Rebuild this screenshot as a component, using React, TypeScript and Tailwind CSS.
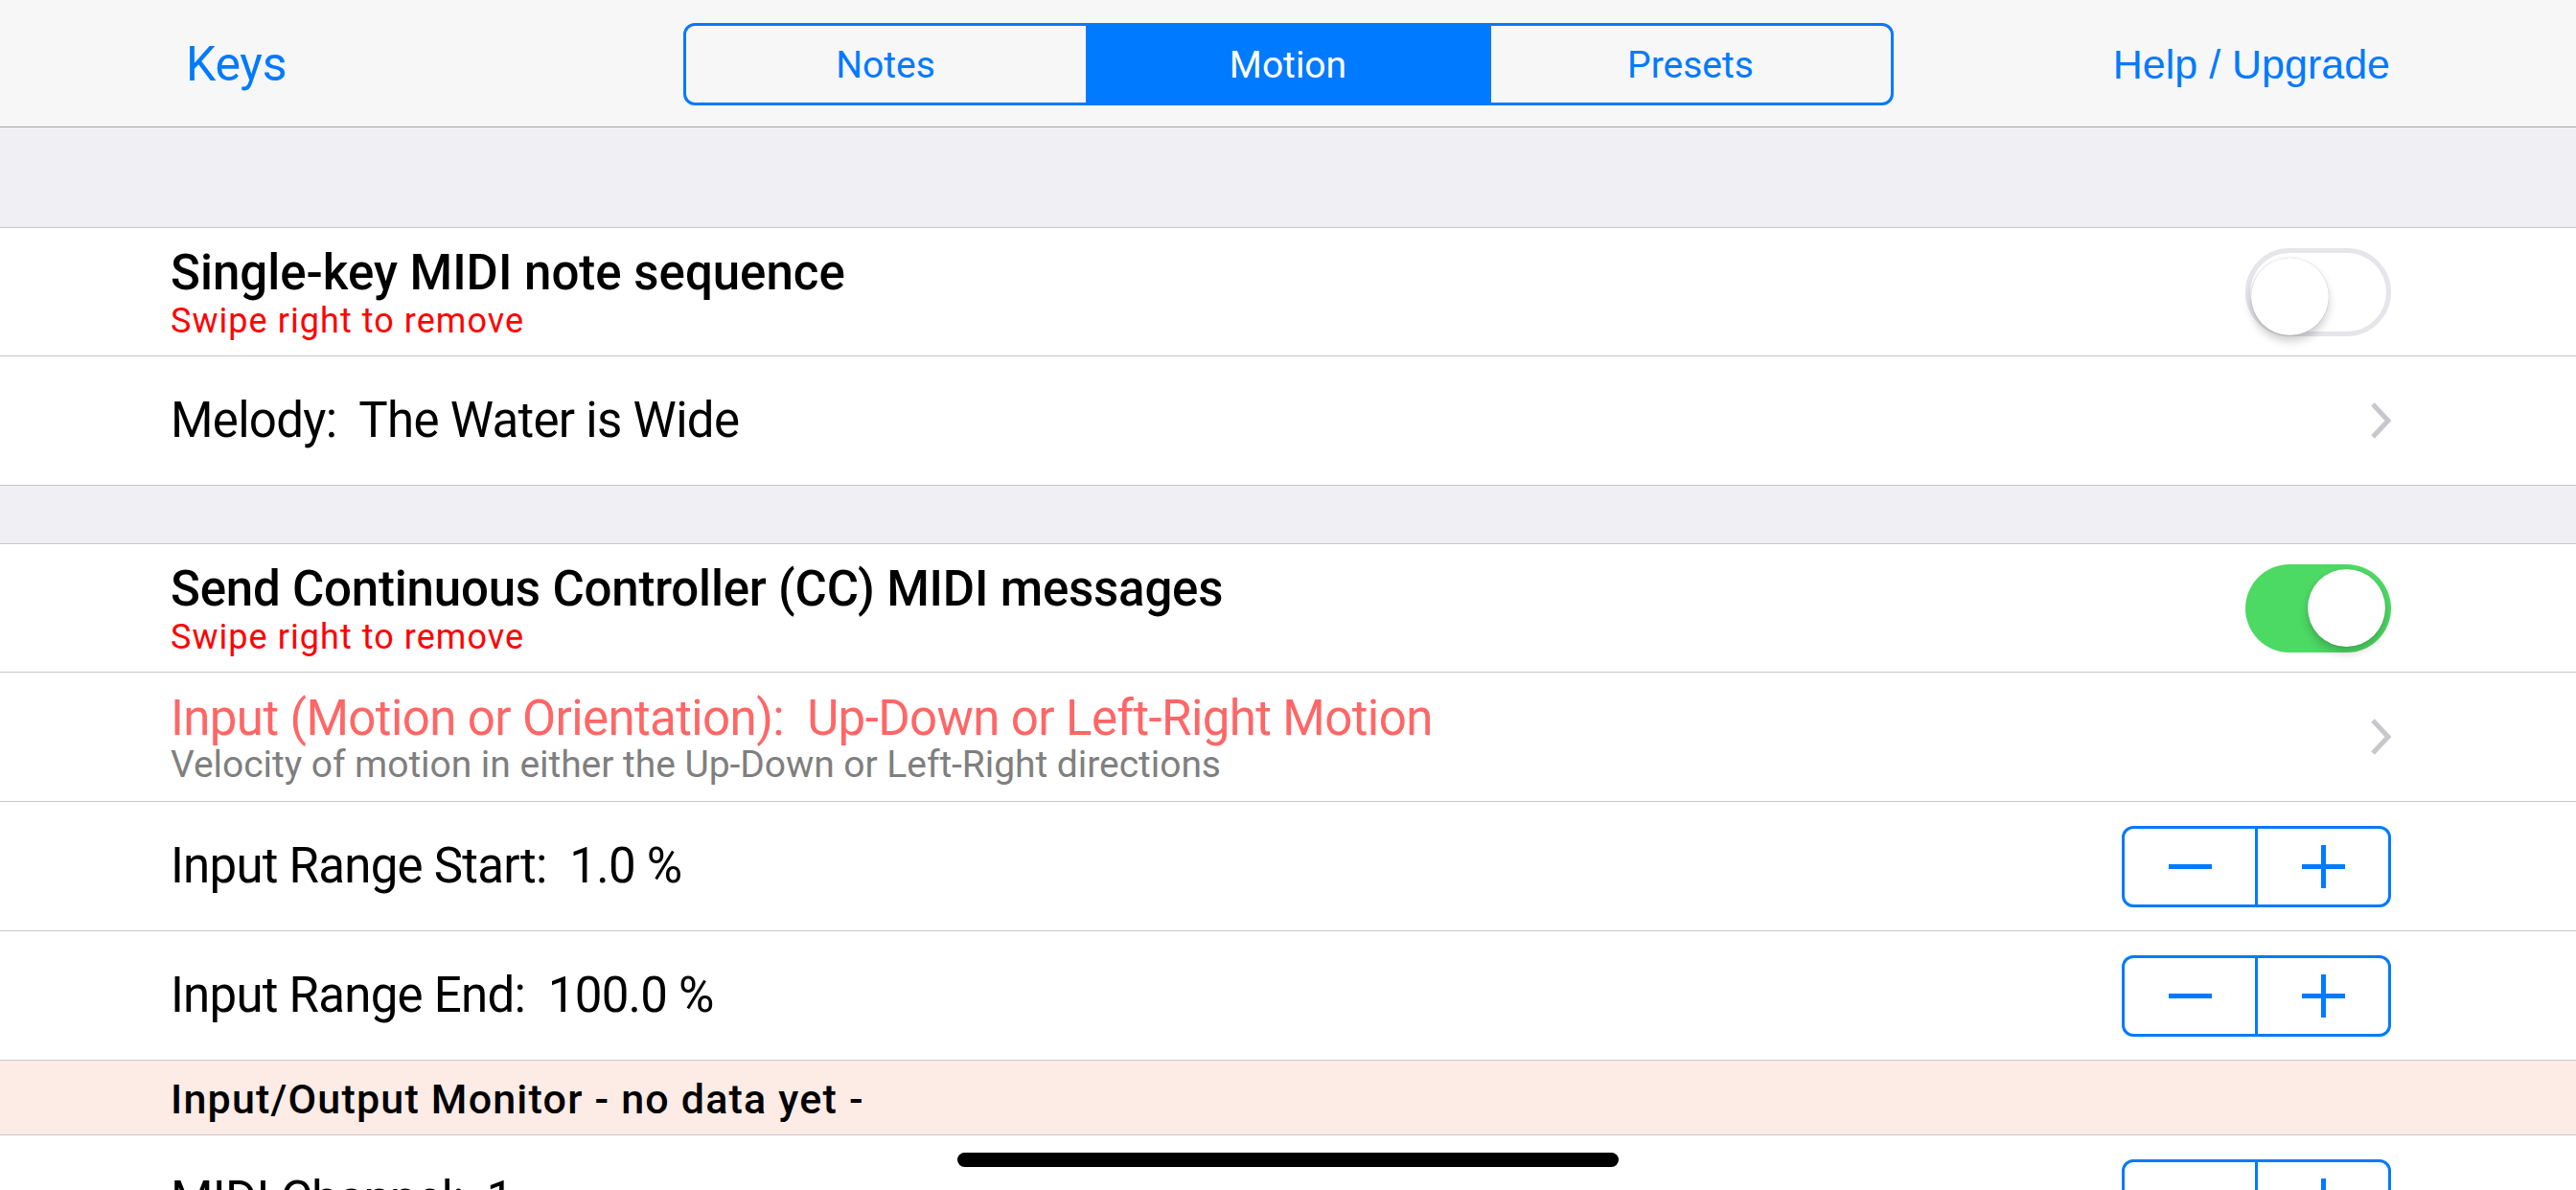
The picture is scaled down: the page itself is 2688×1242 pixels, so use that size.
import React from 'react';

const Chevron = () => (
  <svg width="22" height="38" viewBox="0 0 22 38" fill="none">
    <path d="M3 2 L19 19 L3 36" stroke="#c7c7cc" strokeWidth="5" strokeLinejoin="miter" />
  </svg>
);

const Toggle = ({ on }: { on: boolean }) => (
  <div
    className={`relative w-[152px] h-[92px] rounded-full ${
      on ? 'bg-[#4cd964]' : 'bg-white border-[5px] border-[#e5e5ea]'
    }`}
  >
    <div
      className={`absolute top-[5px] w-[81px] h-[81px] rounded-full bg-white shadow-[0_6px_10px_rgba(0,0,0,0.2),0_0_1px_rgba(0,0,0,0.3)] ${
        on ? 'right-[6px]' : 'left-[1px] top-[0px]'
      }`}
    />
  </div>
);

const Stepper = () => (
  <div className="flex w-[281px] h-[85px] border-[3px] border-[#007aff] rounded-[12px] overflow-hidden">
    <div className="flex-1 flex items-center justify-center">
      <div className="w-[45px] h-[5px] bg-[#007aff]" />
    </div>
    <div className="w-[3px] bg-[#007aff]" />
    <div className="flex-1 flex items-center justify-center">
      <div className="relative w-[45px] h-[45px]">
        <div className="absolute left-0 top-[20px] w-[45px] h-[5px] bg-[#007aff]" />
        <div className="absolute top-0 left-[20px] w-[5px] h-[45px] bg-[#007aff]" />
      </div>
    </div>
  </div>
);

const Row = ({ h, children, right }: { h: string; children: React.ReactNode; right?: React.ReactNode }) => (
  <div className={`flex items-center justify-between bg-white border-b border-[#c8c7cc] pl-[178px] pr-[193px] ${h}`}>
    <div className="flex flex-col">{children}</div>
    {right}
  </div>
);

const tabs = ['Notes', 'Motion', 'Presets'];

export default function App() {
  return (
    <div className="relative w-[2688px] h-[1242px] overflow-hidden bg-white font-['Roboto',sans-serif] text-black">
      {/* Nav bar */}
      <header className="grid grid-cols-[1fr_auto_1fr] items-center h-[133px] bg-[#f7f7f7] border-b border-[#a7a7aa] px-[194px] pt-[2px]">
        <span className="text-[50px] text-[#007aff] tracking-[-0.3px]">Keys</span>
        <div className="flex w-[1263px] h-[86px] border-[3px] border-[#007aff] rounded-[12px] overflow-hidden">
          {tabs.map((t, i) => (
            <div
              key={t}
              className={`flex-1 flex items-center justify-center text-[39px] pt-[2px] ${
                t === 'Motion' ? 'bg-[#007aff] text-white' : 'text-[#007aff]'
              } ${i > 0 ? 'border-l-[3px] border-[#007aff]' : ''}`}
            >
              {t}
            </div>
          ))}
        </div>
        <span className="justify-self-end font-['Liberation_Sans',Arial,sans-serif] text-[43px] text-[#007aff]">
          Help / Upgrade
        </span>
      </header>

      <div className="h-[105px] bg-[#efeff4] border-b border-[#c8c7cc]" />

      <Row h="h-[134px]" right={<Toggle on={false} />}>
        <span className="text-[51px] leading-[60px] font-medium">Single-key MIDI note sequence</span>
        <span className="text-[36px] leading-[40px] text-[#ff0000] tracking-[1.05px]">Swipe right to remove</span>
      </Row>
      <Row h="h-[135px]" right={<Chevron />}>
        <span className="text-[51px] leading-[60px] whitespace-pre tracking-[-0.7px]">Melody:  The Water is Wide</span>
      </Row>

      <div className="h-[61px] bg-[#efeff4] border-b border-[#c8c7cc]" />

      <Row h="h-[134px]" right={<Toggle on={true} />}>
        <span className="text-[51px] leading-[60px] font-medium tracking-[-0.2px]">
          Send Continuous Controller (CC) MIDI messages
        </span>
        <span className="text-[36px] leading-[40px] text-[#ff0000] tracking-[1.05px]">Swipe right to remove</span>
      </Row>
      <Row h="h-[135px]" right={<Chevron />}>
        <div className="flex flex-col pt-[5px]">
          <span className="text-[51px] leading-[53px] text-[#ff6666] whitespace-pre tracking-[-0.6px]">
            Input (Motion or Orientation):  Up-Down or Left-Right Motion
          </span>
          <span className="text-[39px] leading-[44px] text-[#7f7f7f] tracking-[-0.05px]">
            Velocity of motion in either the Up-Down or Left-Right directions
          </span>
        </div>
      </Row>
      <Row h="h-[135px]" right={<Stepper />}>
        <span className="text-[51px] leading-[60px] whitespace-pre tracking-[-0.75px]">Input Range Start:  1.0 %</span>
      </Row>
      <Row h="h-[135px]" right={<Stepper />}>
        <span className="text-[51px] leading-[60px] whitespace-pre tracking-[-0.75px]">Input Range End:  100.0 %</span>
      </Row>

      <div className="flex items-center h-[78px] bg-[#fdebe5] border-b border-[#c8c7cc] pl-[178px] pt-[4px]">
        <span className="text-[43px] font-medium tracking-[1.2px]">Input/Output Monitor - no data yet -</span>
      </div>

      <Row h="h-[135px]" right={<Stepper />}>
        <span className="text-[51px] leading-[60px] whitespace-pre tracking-[-0.75px]">MIDI Channel:  1</span>
      </Row>

      {/* Home indicator */}
      <div className="absolute left-1/2 -translate-x-1/2 bottom-[24px] w-[690px] h-[15px] rounded-full bg-black" />
    </div>
  );
}
